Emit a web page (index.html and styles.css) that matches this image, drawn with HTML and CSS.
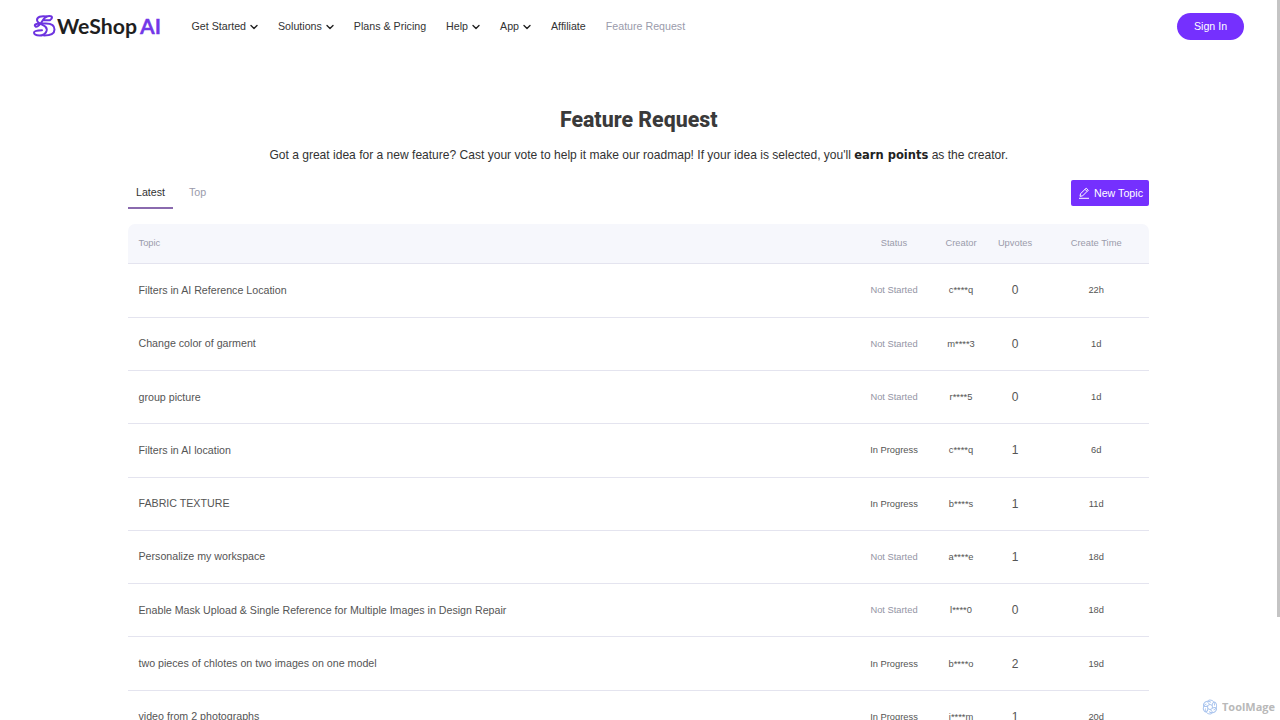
FILE: index.html
```html
<!DOCTYPE html>
<html lang="en">
<head>
<meta charset="utf-8">
<title>Feature Request</title>
<link rel="stylesheet" href="styles.css">
</head>
<body>
<header class="header">
  <a class="logo">
    <svg class="logo-mark" viewBox="0 0 24 24" fill="none" stroke="#6d33e0" stroke-width="2" stroke-linecap="round" stroke-linejoin="round"><path d="M14.500 2.500C9 1.500 5 3 5 6c0 3.500 6 4.200 8.500 6.800 3 3.200 0 8.700-6 8.700-3.800 0-5.500-1.200-5.500-2.700 0-2.300 4-2.500 8-2.500"/><path d="M18 6.200C21 4.500 20.500 2 17.500 2c-2.500 0-5 1.500-6.500 4-2 3.300-5.500 7.300-7.500 6.500C1.500 11 4 9.500 8 9.500h6c5.500 0 8.500 2.500 8.500 6 0 4-4.500 6-10.500 6M18 6.200H11"/></svg>
    <svg class="logo-text" viewBox="0 0 104 26"><text x="0" y="17" textLength="80" lengthAdjust="spacingAndGlyphs" class="logo-name">WeShop</text><text x="83" y="17" textLength="21" lengthAdjust="spacingAndGlyphs" class="logo-ai">AI</text></svg>
  </a>
  <nav class="nav">
    <a>Get Started <svg class="chev" viewBox="0 0 8 6"><path d="M1 1.500 4 4.500 7 1.500"/></svg></a>
    <a>Solutions <svg class="chev" viewBox="0 0 8 6"><path d="M1 1.500 4 4.500 7 1.500"/></svg></a>
    <a>Plans &amp; Pricing</a>
    <a>Help <svg class="chev" viewBox="0 0 8 6"><path d="M1 1.500 4 4.500 7 1.500"/></svg></a>
    <a>App <svg class="chev" viewBox="0 0 8 6"><path d="M1 1.500 4 4.500 7 1.500"/></svg></a>
    <a>Affiliate</a>
    <a class="current">Feature Request</a>
  </nav>
  <a class="sign-in">Sign In</a>
</header>
<main class="main">
  <h1 class="title">Feature Request</h1>
  <p class="intro">Got a great idea for a new feature? Cast your vote to help it make our roadmap! If your idea is selected, you'll <b>earn points</b> as the creator.</p>
  <div class="toolbar">
    <div class="tabs"><a class="tab active">Latest</a><a class="tab">Top</a></div>
    <a class="new-topic"><svg class="pencil" viewBox="0 0 12 12"><path d="M2 9.300 2.500 6.800 8.200 1.100 10.300 3.200 4.600 8.900zM7 2.300 9.100 4.400M1 11.300H11"/></svg>New Topic</a>
  </div>
  <div class="table">
    <div class="row head"><span class="topic">Topic</span><span>Status</span><span>Creator</span><span>Upvotes</span><span class="time">Create Time</span></div>
    <div class="row"><span class="topic">Filters in AI Reference Location</span><span class="idle">Not Started</span><span>c****q</span><span class="votes">0</span><span class="time">22h</span></div>
    <div class="row"><span class="topic">Change color of garment</span><span class="idle">Not Started</span><span>m****3</span><span class="votes">0</span><span class="time">1d</span></div>
    <div class="row"><span class="topic">group picture</span><span class="idle">Not Started</span><span>r****5</span><span class="votes">0</span><span class="time">1d</span></div>
    <div class="row"><span class="topic">Filters in AI location</span><span>In Progress</span><span>c****q</span><span class="votes">1</span><span class="time">6d</span></div>
    <div class="row"><span class="topic">FABRIC TEXTURE</span><span>In Progress</span><span>b****s</span><span class="votes">1</span><span class="time">11d</span></div>
    <div class="row"><span class="topic">Personalize my workspace</span><span class="idle">Not Started</span><span>a****e</span><span class="votes">1</span><span class="time">18d</span></div>
    <div class="row"><span class="topic">Enable Mask Upload &amp; Single Reference for Multiple Images in Design Repair</span><span class="idle">Not Started</span><span>l****0</span><span class="votes">0</span><span class="time">18d</span></div>
    <div class="row"><span class="topic">two pieces of chlotes on two images on one model</span><span>In Progress</span><span>b****o</span><span class="votes">2</span><span class="time">19d</span></div>
    <div class="row"><span class="topic">video from 2 photographs</span><span>In Progress</span><span>i****m</span><span class="votes">1</span><span class="time">20d</span></div>
  </div>
</main>
<div class="scrollbar"></div>
<div class="watermark">
  <svg class="knot" viewBox="-8 -8 16 16"><path id="p" d="M0-2.500C-3-4-3-7 0-7 3-7 5-4.500 4.500-1.500"/><use href="#p" transform="rotate(60)"/><use href="#p" transform="rotate(120)"/><use href="#p" transform="rotate(180)"/><use href="#p" transform="rotate(240)"/><use href="#p" transform="rotate(300)"/><circle r="2.500"/></svg>
  <svg class="wm-text" viewBox="0 0 54 16"><text x="0" y="12" textLength="53" lengthAdjust="spacingAndGlyphs">ToolMage</text></svg>
</div>
</body>
</html>
```
FILE: styles.css
```css
* { box-sizing: border-box; }
body { margin: 0; height: 720px; overflow: hidden; background: #fff; color: #333; font-family: "Liberation Sans", Arial, sans-serif; font-size: 10.67px; }
.header { display: flex; align-items: center; height: 53px; padding: 0 36px 0 32px; }
.logo { display: flex; align-items: center; width: 159.500px; }
.logo-mark { width: 24px; height: 24px; margin-bottom: 1px; }
.logo-text { width: 104px; height: 26px; margin-left: 1px; margin-top: 7px; overflow: visible; }
.logo-text text { font-family: Lato, sans-serif; font-size: 20px; font-weight: 700; }
.logo-name { fill: #1f1f1f; }
.logo-ai { fill: #7338e8; stroke: #7338e8; stroke-width: 0.3; }
.nav { display: flex; gap: 20px; flex: 1; padding-bottom: 2px; white-space: nowrap; }
.nav a { display: flex; align-items: center; gap: 4px; }
.nav .current { color: #9a9bab; }
.chev { width: 8px; height: 6px; margin-top: 2px; fill: none; stroke: #222; stroke-width: 1.4; stroke-linecap: round; stroke-linejoin: round; }
.sign-in { width: 67px; height: 27px; border-radius: 14px; background: #7530fe; color: #fff; text-align: center; line-height: 27px; }
.main { width: 1021.400px; margin-left: 128px; padding-top: 52px; }
.title { margin: 0; font: 800 21.330px/30px Roboto, sans-serif; text-align: center; color: #3a3a3a; }
.intro { margin: 11px 0 0; text-align: center; font-size: 12.050px; line-height: 18px; white-space: nowrap; }
.intro b { font-family: "DejaVu Sans", sans-serif; font-size: 11.500px; line-height: 1; font-weight: 700; color: #222; }
.toolbar { display: flex; justify-content: space-between; align-items: flex-start; height: 59.700px; padding-top: 12px; }
.tabs { display: flex; }
.tab { height: 33px; padding: 0 8px; line-height: 33px; color: #9a9bab; margin-right: 8px; }
.tab.active { color: #333; border-bottom: 2px solid #8a6aae; }
.new-topic { display: flex; align-items: center; gap: 4.500px; width: 78.400px; height: 25.500px; margin-top: 4px; padding-left: 6.500px; border-radius: 2px; background: #7530fe; color: #fff; white-space: nowrap; }
.pencil { width: 12px; height: 12px; fill: none; stroke: #fff; stroke-width: 1; stroke-linejoin: round; }
.row { display: grid; grid-template-columns: 733px 66px 68px 40px 1fr; align-items: center; height: 53.330px; border-bottom: 1px solid #e4e4ef; font-size: 9.330px; text-align: center; color: #555; }
.row .topic { padding: 0 0 1px 10.500px; text-align: left; font-size: 10.670px; }
.row .idle { color: #9495a5; }
.row .votes { font-size: 12px; }
.row .time { padding-left: 8px; }
.row.head { height: 40.500px; background: #f6f7fc; color: #9a9bab; border-radius: 7px 7px 0 0; }
.row.head .topic { padding-bottom: 0; font-size: 9.330px; }
.scrollbar { position: absolute; top: 0; right: 0; width: 3px; height: 617px; background: #c4c4c4; }
.watermark { position: absolute; left: 1202px; top: 699px; display: flex; align-items: center; gap: 4px; }
.knot { width: 16px; height: 16px; fill: none; stroke: #a9c4ee; stroke-width: 1; }
.wm-text { width: 54px; height: 16px; }
.wm-text text { font: 700 11px "Open Sans", sans-serif; fill: #b9b9b9; }
```
